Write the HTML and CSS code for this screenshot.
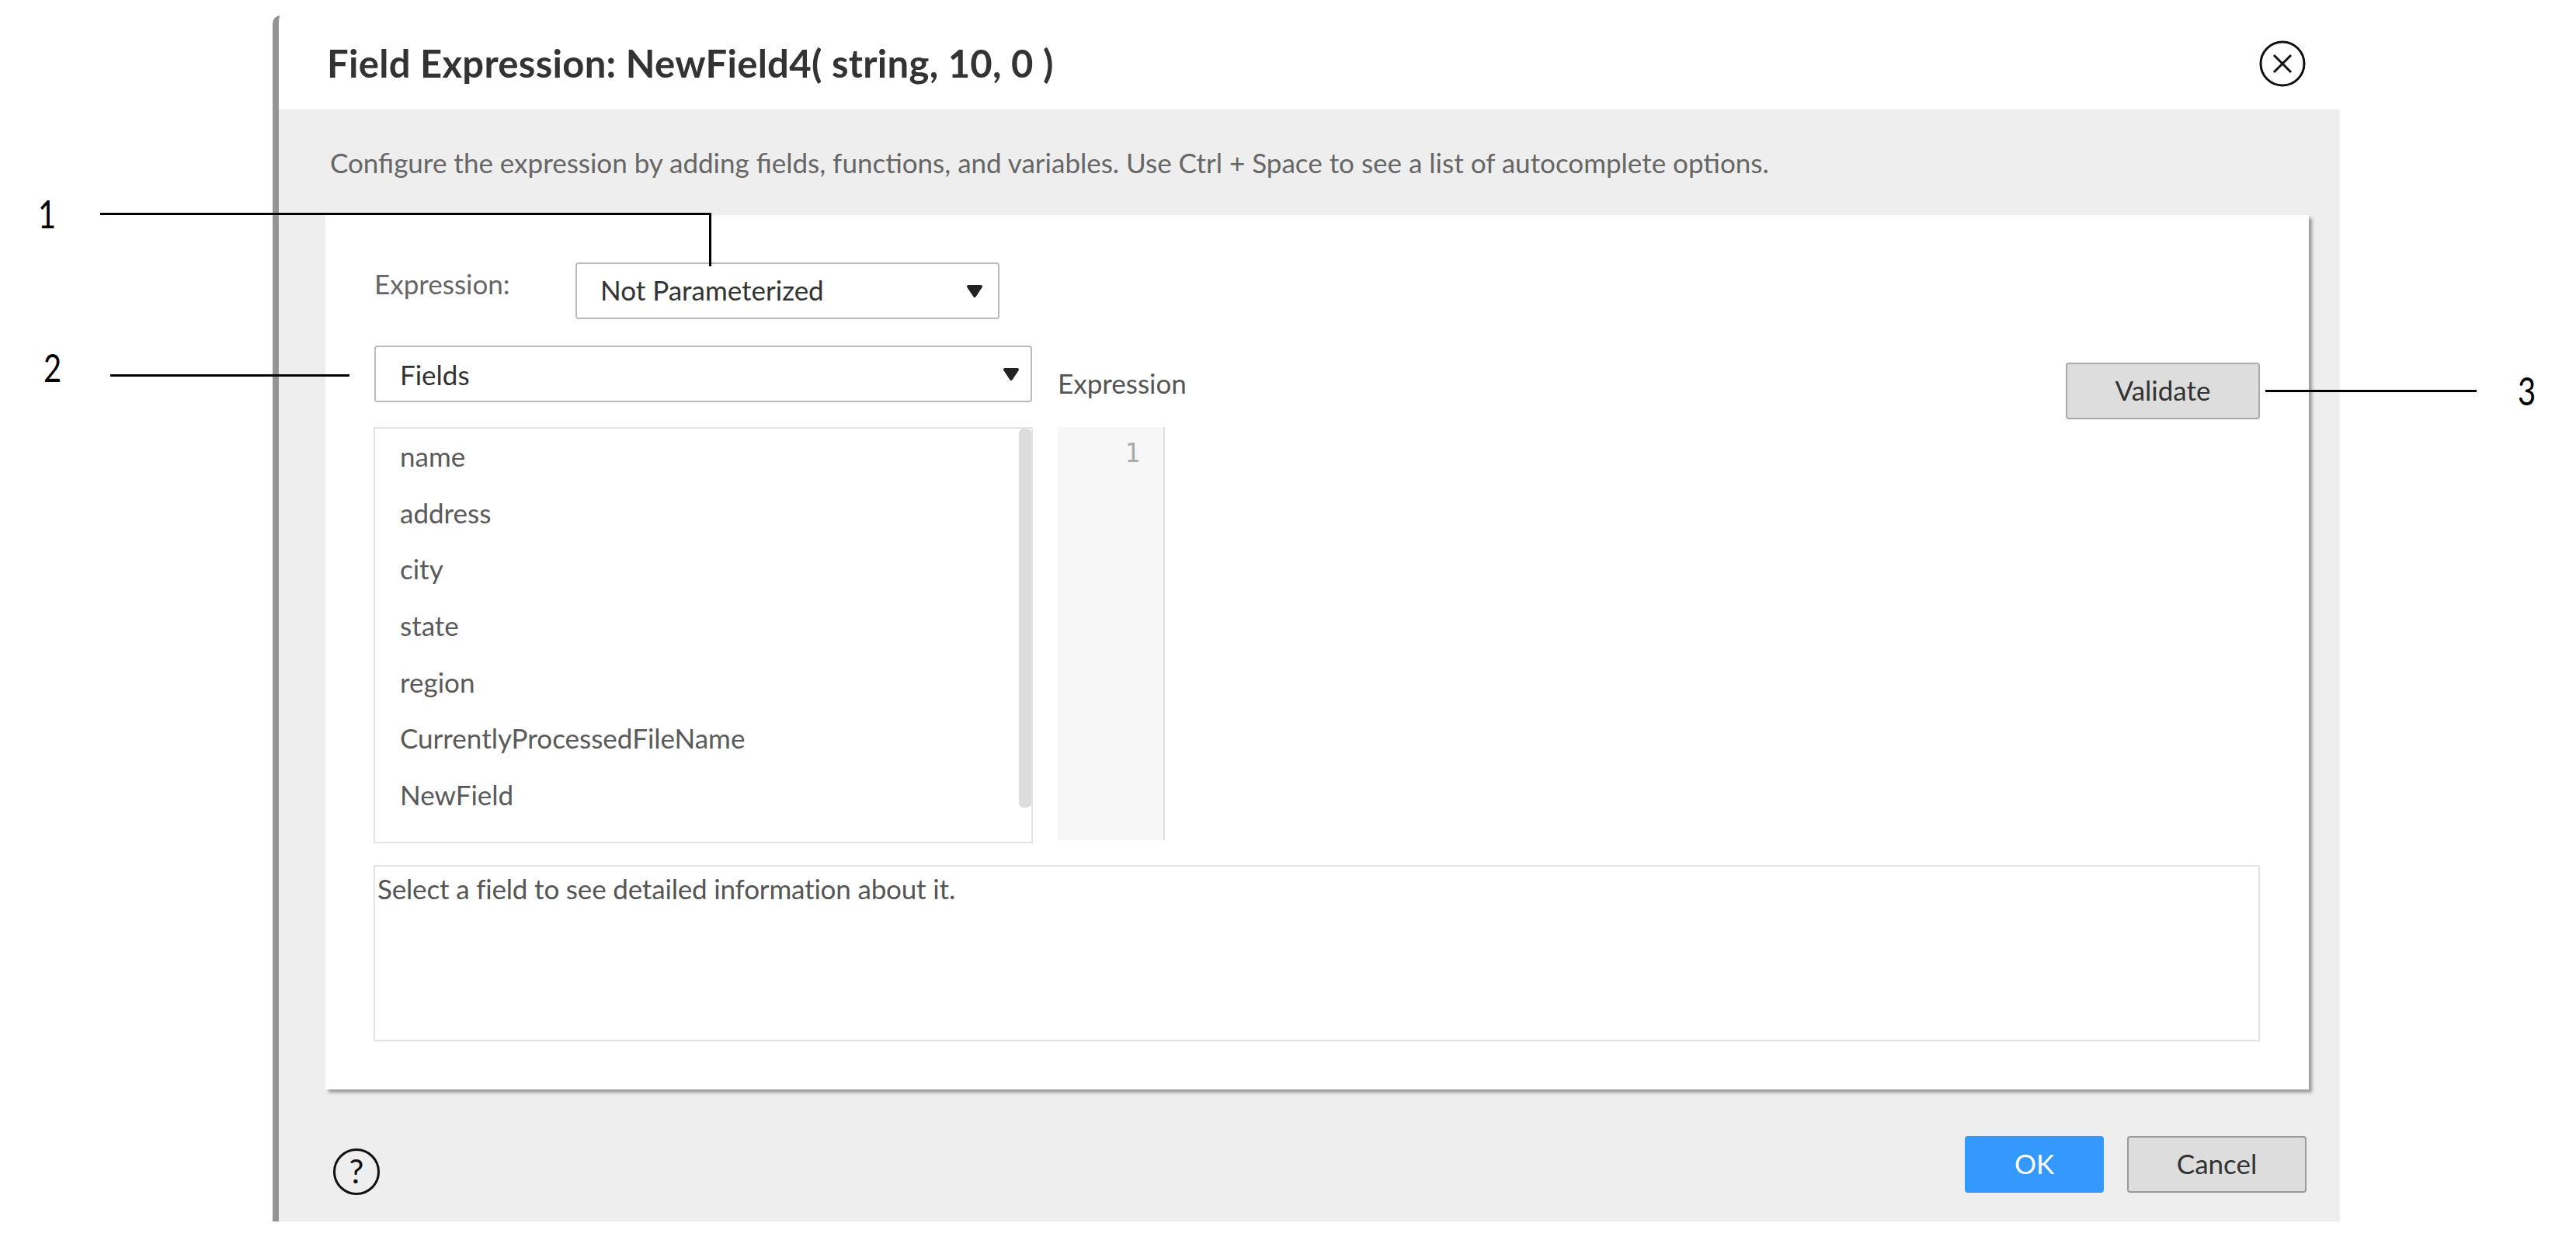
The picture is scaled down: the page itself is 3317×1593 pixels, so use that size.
FILE: index.html
```html
<!DOCTYPE html>
<html lang="en">
<head>
<meta charset="utf-8">
<title>Field Expression</title>
<link rel="stylesheet" href="styles.css">
</head>
<body>
<main class="dialog">
  <header class="dialog-head">
    <h1 class="title">Field Expression: NewField4( string, 10, 0 )</h1>
    <svg class="close" viewBox="0 0 60 60" aria-label="Close"><circle cx="30" cy="30" r="28" fill="none" stroke="#111" stroke-width="3"/><path d="M19 19 L41 41 M41 19 L19 41" fill="none" stroke="#111" stroke-width="3"/></svg>
  </header>
  <div class="band">
    <p class="intro">Configure the expression by adding fields, functions, and variables. Use Ctrl + Space to see a list of autocomplete options.</p>
    <section class="card">
      <div class="param-row">
        <span class="param-label">Expression:</span>
        <div class="select select-param"><span class="select-text">Not Parameterized</span><svg class="caret" viewBox="0 0 22 18"><path d="M3 3 H19 L11 15 Z" fill="#222" stroke="#222" stroke-width="4" stroke-linejoin="round"/></svg></div>
      </div>
      <div class="editor-grid">
        <div class="select select-fields"><span>Fields</span><svg class="caret" viewBox="0 0 22 18"><path d="M3 3 H19 L11 15 Z" fill="#222" stroke="#222" stroke-width="4" stroke-linejoin="round"/></svg></div>
        <div class="expr-head">
          <span class="expr-label">Expression</span>
          <button class="btn btn-validate">Validate</button>
        </div>
        <div class="list">
          <ul class="rows">
            <li>name</li>
            <li>address</li>
            <li>city</li>
            <li>state</li>
            <li>region</li>
            <li>CurrentlyProcessedFileName</li>
            <li>NewField</li>
            <li>mappingId</li>
          </ul>
          <div class="scrollbar"></div>
        </div>
        <div class="code">
          <div class="gutter">1</div>
        </div>
      </div>
      <div class="info">Select a field to see detailed information about it.</div>
    </section>
    <footer class="foot">
      <div class="help">?</div>
      <div class="actions">
        <button class="btn btn-ok">OK</button>
        <button class="btn btn-cancel">Cancel</button>
      </div>
    </footer>
  </div>
</main>

<div class="callout line-1a"></div>
<div class="callout line-1b"></div>
<div class="callout line-2"></div>
<div class="callout line-3"></div>
<span class="num num-1">1</span>
<span class="num num-2">2</span>
<span class="num num-3">3</span>
</body>
</html>
```

FILE: styles.css
```css
* { box-sizing: border-box; }
html, body { margin: 0; height: 100%; background: #fff; }
body {
  position: relative;
  width: 3317px;
  height: 1593px;
  overflow: hidden;
  padding: 20px 0 0 351px;
  font-family: "Lato", "Liberation Sans", sans-serif;
  font-size: 35px;
  color: #555;
}
.dialog {
  width: 2662px;
  height: 1553px;
  border-left: 8px solid #939393;
  border-top-left-radius: 10px;
  display: flex;
  flex-direction: column;
}
.dialog-head {
  height: 121px;
  flex: none;
  display: flex;
  align-items: center;
  justify-content: space-between;
  padding: 0 44px 0 62px;
}
.title { margin: 0; font-size: 49px; font-weight: 700; color: #333; letter-spacing: 0.3px; }
.close { width: 60px; height: 60px; margin-top: 3px; }
.band { flex: 1; background: #eee; display: flex; flex-direction: column; }
.intro { margin: 0; height: 136px; padding: 46px 0 0 66px; color: #666; line-height: 44px; }
.card {
  margin: 0 40px 0 60px;
  height: 1126px;
  flex: none;
  background: #fff;
  box-shadow: 4px 4px 4px #999;
  padding: 61px 63px 0;
}
.param-row { display: flex; align-items: flex-start; height: 107px; }
.param-label { width: 259px; line-height: 54px; color: #666; }
.select {
  height: 73px;
  border: 2px solid #bbb;
  border-radius: 4px;
  background: #fff;
  display: flex;
  align-items: center;
  justify-content: space-between;
  color: #333;
}
.select-text { padding-bottom: 3px; }
.select-param { width: 546px; padding: 0 19px 0 30px; }
.select-fields { width: 847px; padding: 0 14px 0 31px; }
.caret { width: 22px; height: 18px; }
.editor-grid {
  display: grid;
  grid-template-columns: 848px 1fr;
  grid-template-rows: 105px 536px;
  column-gap: 32px;
}
.expr-head { display: flex; justify-content: space-between; align-items: flex-start; padding-top: 22px; }
.expr-label { line-height: 52px; color: #555; }
.btn {
  font: inherit;
  border-radius: 4px;
  padding: 0 0 3px;
  color: #333;
}
.btn-validate { width: 250px; height: 73px; background: #ddd; border: 2px solid #aaa; }
.list { position: relative; border: 2px solid #e4e4e4; overflow: hidden; margin-left: -1px; height: 536px; }
.rows { list-style: none; margin: -1px 0 0; padding: 0 0 0 32px; }
.rows li { height: 72.7px; line-height: 72.7px; color: #5a5a5a; }
.scrollbar {
  position: absolute;
  top: 0;
  right: 0;
  width: 16px;
  height: 488px;
  background: #ddd;
  border-radius: 6px;
}
.code { height: 532px; }
.gutter {
  width: 138px;
  height: 100%;
  background: #f7f7f7;
  border-right: 2px solid #e0e0e0;
  padding: 14px 30px 0 0;
  text-align: right;
  font-family: "DejaVu Sans Mono", monospace;
  font-size: 33px;
  color: #aaa;
}
.info {
  margin: 28px 0 0 -1px;
  height: 227px;
  width: 2429px;
  border: 2px solid #e4e4e4;
  padding: 6px 0 0 3px;
  line-height: 44px;
  letter-spacing: -0.17px;
  color: #555;
}
.foot { flex: 1; display: flex; justify-content: space-between; align-items: flex-start; padding: 60px 43px 0 70px; }
.help {
  width: 60px;
  height: 60px;
  margin-top: 16px;
  border: 3px solid #111;
  border-radius: 50%;
  text-align: center;
  line-height: 52px;
  font-size: 42px;
  color: #111;
}
.actions { display: flex; gap: 30px; }
.btn-ok { width: 179px; height: 73px; background: #3399ff; border: 0; color: #fff; }
.btn-cancel { width: 231px; height: 73px; background: #ddd; border: 2px solid #999; }

.callout { position: absolute; background: #000; }
.line-1a { left: 129px; top: 274px; width: 787px; height: 3px; }
.line-1b { left: 913px; top: 276px; width: 3px; height: 67px; }
.line-2 { left: 142px; top: 482px; width: 308px; height: 3px; }
.line-3 { left: 2917px; top: 502px; width: 272px; height: 3px; }
.num { position: absolute; font-size: 50px; line-height: 50px; color: #000; transform: scaleX(.8); transform-origin: left top; }
.num-1 { left: 49px; top: 250px; }
.num-2 { left: 56px; top: 448px; }
.num-3 { left: 3242px; top: 478px; }
```
